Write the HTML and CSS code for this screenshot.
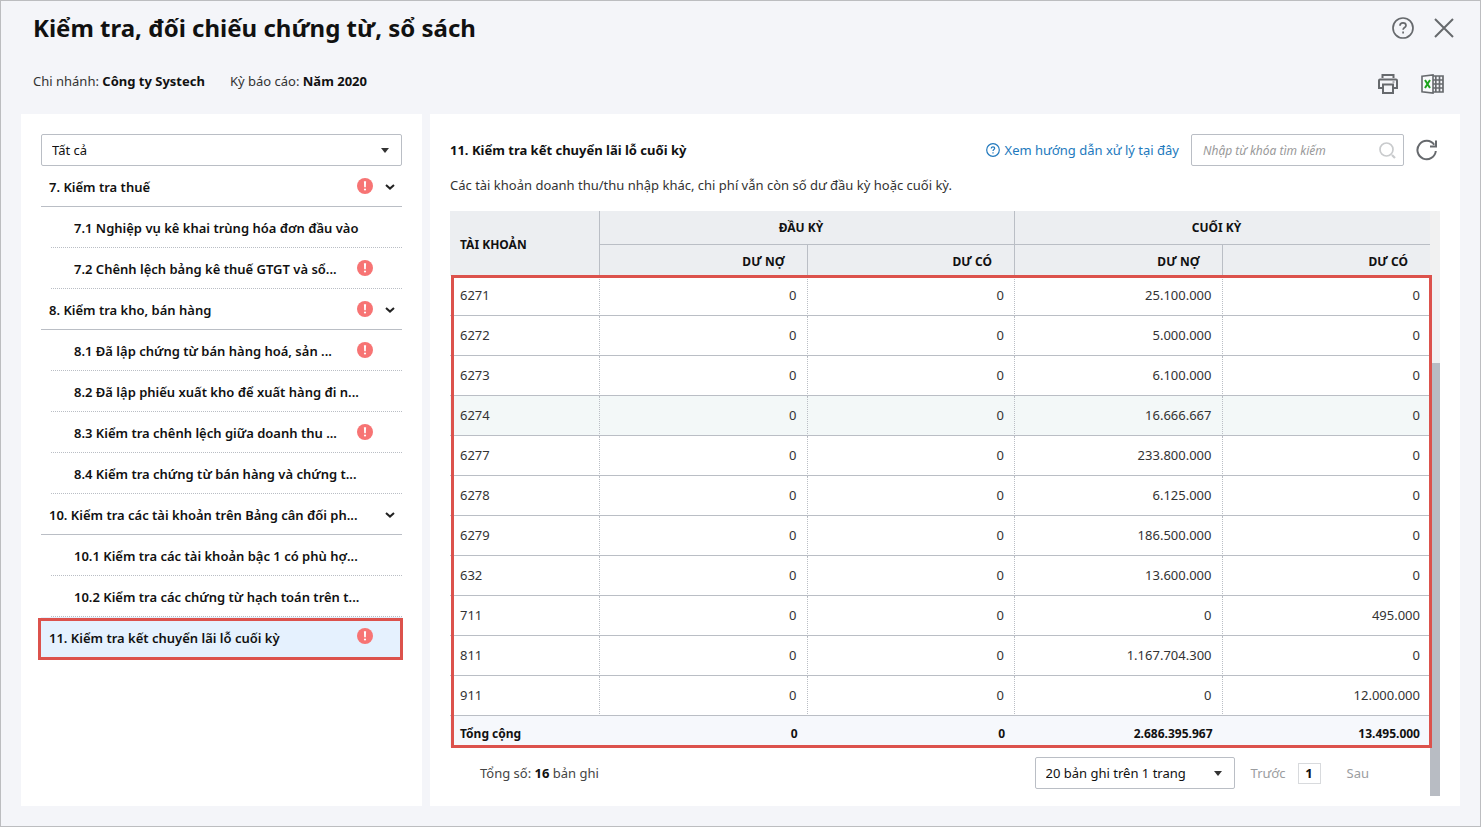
FILE: index.html
```html
<!DOCTYPE html>
<html lang="vi">
<head>
<meta charset="utf-8">
<title>Kiểm tra, đối chiếu chứng từ, sổ sách</title>
<link rel="stylesheet" href="styles.css">
</head>
<body>
<svg class="sprite" aria-hidden="true">
  <symbol id="alert" viewBox="0 0 16 16"><circle cx="8" cy="8" r="8" fill="#f77474"/><path d="M6.900 3.200h2.200L8.800 9.300H7.200z" fill="#fff"/><circle cx="8" cy="11.500" r="1.100" fill="#fff"/></symbol>
  <symbol id="chevron" viewBox="0 0 10 6"><path d="M1 1l4 3.6L9 1" fill="none" stroke="#222" stroke-width="2"/></symbol>
  <symbol id="caret" viewBox="0 0 8 5"><path d="M0 0h8L4 5z" fill="#333"/></symbol>
</svg>
<div class="page">
  <header class="top">
    <div class="title-row">
      <h1 class="title">Kiểm tra, đối chiếu chứng từ, sổ sách</h1>
      <div class="window-tools">
        <button class="icon-btn" aria-label="Trợ giúp"><svg width="22" height="22" viewBox="0 0 22 22" fill="none" stroke="#66696d" stroke-width="1.7"><circle cx="11" cy="11" r="10"/><path d="M8 8.7c0-1.800 1.300-2.900 3-2.900s3 1 3 2.600c0 2-2.900 2.200-2.900 4.300"/><path d="M11.100 14.400v2"/></svg></button>
        <button class="icon-btn" aria-label="Đóng"><svg width="20" height="20" viewBox="0 0 20 20" fill="none" stroke="#66696d" stroke-width="2"><path d="M1 1l18 18M19 1L1 19"/></svg></button>
      </div>
    </div>
    <div class="meta-row">
      <div class="meta">
        <span>Chi nhánh: <b>Công ty Systech</b></span>
        <span>Kỳ báo cáo: <b>Năm 2020</b></span>
      </div>
      <div class="export-tools">
        <button class="icon-btn" aria-label="In"><svg width="20" height="20" viewBox="0 0 20 20" fill="none" stroke="#66696d" stroke-width="2"><path d="M4.500 4V1h11v3M5 14H1V6.500Q1 5.500 2 5.500h16q1 0 1 1V14h-4"/><path d="M5 10.500h10V19H5z"/><path d="M14.500 8h2" stroke-width="1"/></svg></button>
        <button class="icon-btn" aria-label="Xuất Excel"><svg width="23" height="20" viewBox="0 0 23 20" fill="none" stroke="#66696d"><path d="M11.500 2H22v16H11.500M12 6h10M12 10h10M12 14h10M14.800 2v16M18.500 2v16" stroke-width="1.700"/><path d="M1 2.300L12 .9v18.200L1 17.700z" fill="#f9fafc" stroke-width="1.600"/><path d="M4 6l5 8M9 6l-5 8" stroke="#1ea41e" stroke-width="2"/></svg></button>
      </div>
    </div>
  </header>
  <main class="panels">
    <aside class="side">
      <div class="select-box">
        <select aria-label="Bộ lọc"><option>Tất cả</option></select>
        <svg class="caret"><use href="#caret"/></svg>
      </div>
      <ul class="checks">
        <li class="check group"><span class="name">7. Kiểm tra thuế</span><svg class="alert"><use href="#alert"/></svg><svg class="chevron"><use href="#chevron"/></svg></li>
        <li class="check sub"><span class="name">7.1 Nghiệp vụ kê khai trùng hóa đơn đầu vào</span></li>
        <li class="check sub"><span class="name">7.2 Chênh lệch bảng kê thuế GTGT và sổ...</span><svg class="alert"><use href="#alert"/></svg></li>
        <li class="check group"><span class="name">8. Kiểm tra kho, bán hàng</span><svg class="alert"><use href="#alert"/></svg><svg class="chevron"><use href="#chevron"/></svg></li>
        <li class="check sub"><span class="name">8.1 Đã lập chứng từ bán hàng hoá, sản ...</span><svg class="alert"><use href="#alert"/></svg></li>
        <li class="check sub"><span class="name">8.2 Đã lập phiếu xuất kho để xuất hàng đi n...</span></li>
        <li class="check sub"><span class="name">8.3 Kiểm tra chênh lệch giữa doanh thu ...</span><svg class="alert"><use href="#alert"/></svg></li>
        <li class="check sub"><span class="name">8.4 Kiểm tra chứng từ bán hàng và chứng t...</span></li>
        <li class="check group"><span class="name">10. Kiểm tra các tài khoản trên Bảng cân đối ph...</span><svg class="chevron"><use href="#chevron"/></svg></li>
        <li class="check sub"><span class="name">10.1 Kiểm tra các tài khoản bậc 1 có phù hợ...</span></li>
        <li class="check sub"><span class="name">10.2 Kiểm tra các chứng từ hạch toán trên t...</span></li>
        <li class="check group active"><span class="name">11. Kiểm tra kết chuyển lãi lỗ cuối kỳ</span><svg class="alert"><use href="#alert"/></svg></li>
      </ul>
    </aside>
    <section class="detail">
      <div class="detail-head">
        <h2 class="detail-title">11. Kiểm tra kết chuyển lãi lỗ cuối kỳ</h2>
        <a class="guide" href="#"><svg width="14" height="14" viewBox="0 0 14 14" fill="none" stroke="#2279bd" stroke-width="1.200"><circle cx="7" cy="7" r="6.300"/><path d="M5.300 5.500c0-1 .7-1.700 1.700-1.700s1.700.6 1.700 1.500c0 1.200-1.700 1.300-1.700 2.700M7 9.200v1.300"/></svg>Xem hướng dẫn xử lý tại đây</a>
        <div class="search">
          <input type="text" aria-label="Tìm kiếm" placeholder="Nhập từ khóa tìm kiếm">
          <svg class="lens" viewBox="0 0 17 17" fill="none" stroke="#c9cbcd"><circle cx="7.500" cy="7.500" r="6.500" stroke-width="1.700"/><path d="M13 13l3 3" stroke-width="2.200"/></svg>
        </div>
        <button class="icon-btn" aria-label="Tải lại"><svg width="22" height="22" viewBox="0 0 22 22" fill="none" stroke="#66696d" stroke-width="2"><path d="M19.800 12A9.200 9.200 0 1 1 18.200 5.800"/><path d="M20 1.500v6h-6"/></svg></button>
      </div>
      <p class="note">Các tài khoản doanh thu/thu nhập khác, chi phí vẫn còn số dư đầu kỳ hoặc cuối kỳ.</p>
      <div class="scroller">
        <div class="content">
          <div class="table-wrap">
          <table class="ledger">
            <colgroup><col class="col-account"><col><col><col><col></colgroup>
            <thead>
              <tr><th rowspan="2" class="account">TÀI KHOẢN</th><th colspan="2" class="period">ĐẦU KỲ</th><th colspan="2" class="period">CUỐI KỲ</th></tr>
              <tr><th class="side-label">DƯ NỢ</th><th class="side-label">DƯ CÓ</th><th class="side-label">DƯ NỢ</th><th class="side-label">DƯ CÓ</th></tr>
            </thead>
            <tbody>
              <tr><td>6271</td><td>0</td><td>0</td><td>25.100.000</td><td>0</td></tr>
              <tr><td>6272</td><td>0</td><td>0</td><td>5.000.000</td><td>0</td></tr>
              <tr><td>6273</td><td>0</td><td>0</td><td>6.100.000</td><td>0</td></tr>
              <tr class="hover"><td>6274</td><td>0</td><td>0</td><td>16.666.667</td><td>0</td></tr>
              <tr><td>6277</td><td>0</td><td>0</td><td>233.800.000</td><td>0</td></tr>
              <tr><td>6278</td><td>0</td><td>0</td><td>6.125.000</td><td>0</td></tr>
              <tr><td>6279</td><td>0</td><td>0</td><td>186.500.000</td><td>0</td></tr>
              <tr><td>632</td><td>0</td><td>0</td><td>13.600.000</td><td>0</td></tr>
              <tr><td>711</td><td>0</td><td>0</td><td>0</td><td>495.000</td></tr>
              <tr><td>811</td><td>0</td><td>0</td><td>1.167.704.300</td><td>0</td></tr>
              <tr><td>911</td><td>0</td><td>0</td><td>0</td><td>12.000.000</td></tr>
            </tbody>
            <tfoot>
              <tr><td>Tổng cộng</td><td>0</td><td>0</td><td>2.686.395.967</td><td>13.495.000</td></tr>
            </tfoot>
          </table>
          <div class="highlight"></div>
          </div>
          <div class="pager">
            <span class="count">Tổng số: <b>16</b> bản ghi</span>
            <div class="select-box page-size">
              <select aria-label="Số bản ghi trên trang"><option>20 bản ghi trên 1 trang</option></select>
              <svg class="caret"><use href="#caret"/></svg>
            </div>
            <button class="step">Trước</button>
            <button class="page-no">1</button>
            <button class="step">Sau</button>
          </div>
        </div>
        <div class="track"><div class="thumb"></div></div>
      </div>
    </section>
  </main>
</div>
</body>
</html>
```
FILE: styles.css
```css
* { box-sizing: border-box; }
body {
  margin: 0;
  background: #f4f5f9;
  color: #111;
  font: 13px/20px "Noto Sans", sans-serif;
}
button, input, select { font: inherit; color: inherit; }
.sprite { display: none; }
.page {
  min-height: 100vh;
  display: flex;
  flex-direction: column;
  border: 1px solid #bcbdc0;
  padding: 0 20px 20px;
}
.top { padding: 8px 6px 0 12px; }
.title-row, .meta-row { display: flex; justify-content: space-between; align-items: center; }
.title-row { height: 38px; }
.title { margin: 0; font-size: 24px; line-height: 38px; font-weight: 700; }
.window-tools { display: flex; align-items: center; gap: 20px; }
.export-tools { display: flex; align-items: center; gap: 23px; padding: 6px 10px 0 0; }
.icon-btn { display: flex; border: 0; padding: 0; background: none; cursor: pointer; }
.meta-row { height: 67px; }
.meta { display: flex; gap: 25px; color: #333; }
b { font-weight: 700; color: #111; }
.panels { flex: 1; display: flex; gap: 8px; }
.side { flex: 0 0 401px; background: #fff; padding: 20px; }
.select-box { position: relative; }
.select-box select {
  appearance: none;
  display: block;
  width: 100%;
  height: 32px;
  padding: 0 32px 0 10px;
  border: 1px solid #babec5;
  border-radius: 2px;
  background: #fff;
}
.caret { position: absolute; right: 13px; top: 14px; width: 8px; height: 5px; pointer-events: none; }
.checks { list-style: none; margin: 0; padding: 0; }
.check {
  position: relative;
  display: grid;
  grid-template-columns: 1fr 16px 10px;
  column-gap: 12px;
  align-items: center;
  height: 41px;
  padding: 2px 7px 0 8px;
  border-bottom: 1px solid #babec5;
  font-weight: 600;
}
.name { grid-column: 1; white-space: nowrap; width: 0; }
.alert { grid-column: 2; grid-row: 1; width: 16px; height: 16px; margin-bottom: 3px; }
.chevron { grid-column: 3; grid-row: 1; width: 10px; height: 6px; }
.sub { margin-left: 10px; padding-left: 23px; border-bottom-style: dotted; }
.active { background: #e5f1fe; border-bottom: 0; padding-top: 0; }
.active::after { content: ""; position: absolute; inset: 1px -1px -2px -3px; border: 3px solid #dc524c; }
.detail { flex: 1; min-width: 0; display: flex; flex-direction: column; background: #fff; padding: 20px 20px 10px; }
.detail-head { display: flex; align-items: center; }
.detail-head .icon-btn { margin: 0 2px 0 12px; }
.detail-title { flex: 1; margin: 0; font-size: 13px; font-weight: 700; }
.guide { display: flex; align-items: center; gap: 5px; color: #2279bd; text-decoration: none; }
.search { position: relative; width: 213px; margin-left: 12px; }
.search input { display: block; width: 100%; height: 32px; padding: 0 32px 0 11px; border: 1px solid #babec5; border-radius: 2px; font-size: 12px; }
.search input::placeholder { color: #999; font-style: italic; opacity: 1; }
.lens { position: absolute; right: 8px; top: 8px; width: 17px; height: 17px; }
.note { margin: 9px 0 16px; color: #333; }
.scroller { flex: 1; display: flex; }
.content { flex: 1; min-width: 0; }
.track { width: 10px; background: #f1f1f1; display: flex; flex-direction: column; justify-content: flex-end; }
.thumb { height: 74%; background: #b8bcc3; }
.table-wrap { position: relative; }
.ledger { width: 100%; table-layout: fixed; border-collapse: separate; border-spacing: 0; }
.col-account { width: 150px; }
.ledger th { background: #eceef1; border-right: 1px solid #babec5; padding: 2px 10px 0; font-size: 12px; font-weight: 700; text-align: left; }
.ledger th:last-child { border-right: 0; }
.ledger thead tr:first-child { height: 34px; }
.ledger thead tr:last-child { height: 31px; }
.ledger .period { text-align: center; padding: 0 22px 0 10px; border-bottom: 1px solid #babec5; }
.ledger .side-label { text-align: right; padding-right: 22px; }
.ledger td { padding: 0 10px; text-align: right; }
.ledger td:first-child { text-align: left; }
.ledger tbody td { height: 40px; padding-bottom: 1px; color: #333; border-right: 1px dotted #babec5; border-bottom: 1px solid #babec5; }
.ledger tbody td:last-child { border-right: 0; }
.ledger .hover td { background: #f3f8f8; }
.ledger tfoot td { height: 31px; padding-top: 5px; background: #f6f8fc; font-size: 12px; font-weight: 700; }
.highlight { position: absolute; inset: 64px -2px -1px 1px; border: 3px solid #dc524c; pointer-events: none; }
.pager { display: flex; align-items: center; padding: 10px 61px 7px 30px; }
.count { flex: 1; color: #444; }
.page-size { width: 200px; margin-right: 16px; }
.step { border: 0; padding: 0; background: none; color: #9b9da0; }
.page-no { margin: 0 26px 0 12px; width: 23px; height: 21px; padding: 0; border: 1px solid #d8dadd; background: #fff; font-weight: 700; line-height: 18px; }
```
